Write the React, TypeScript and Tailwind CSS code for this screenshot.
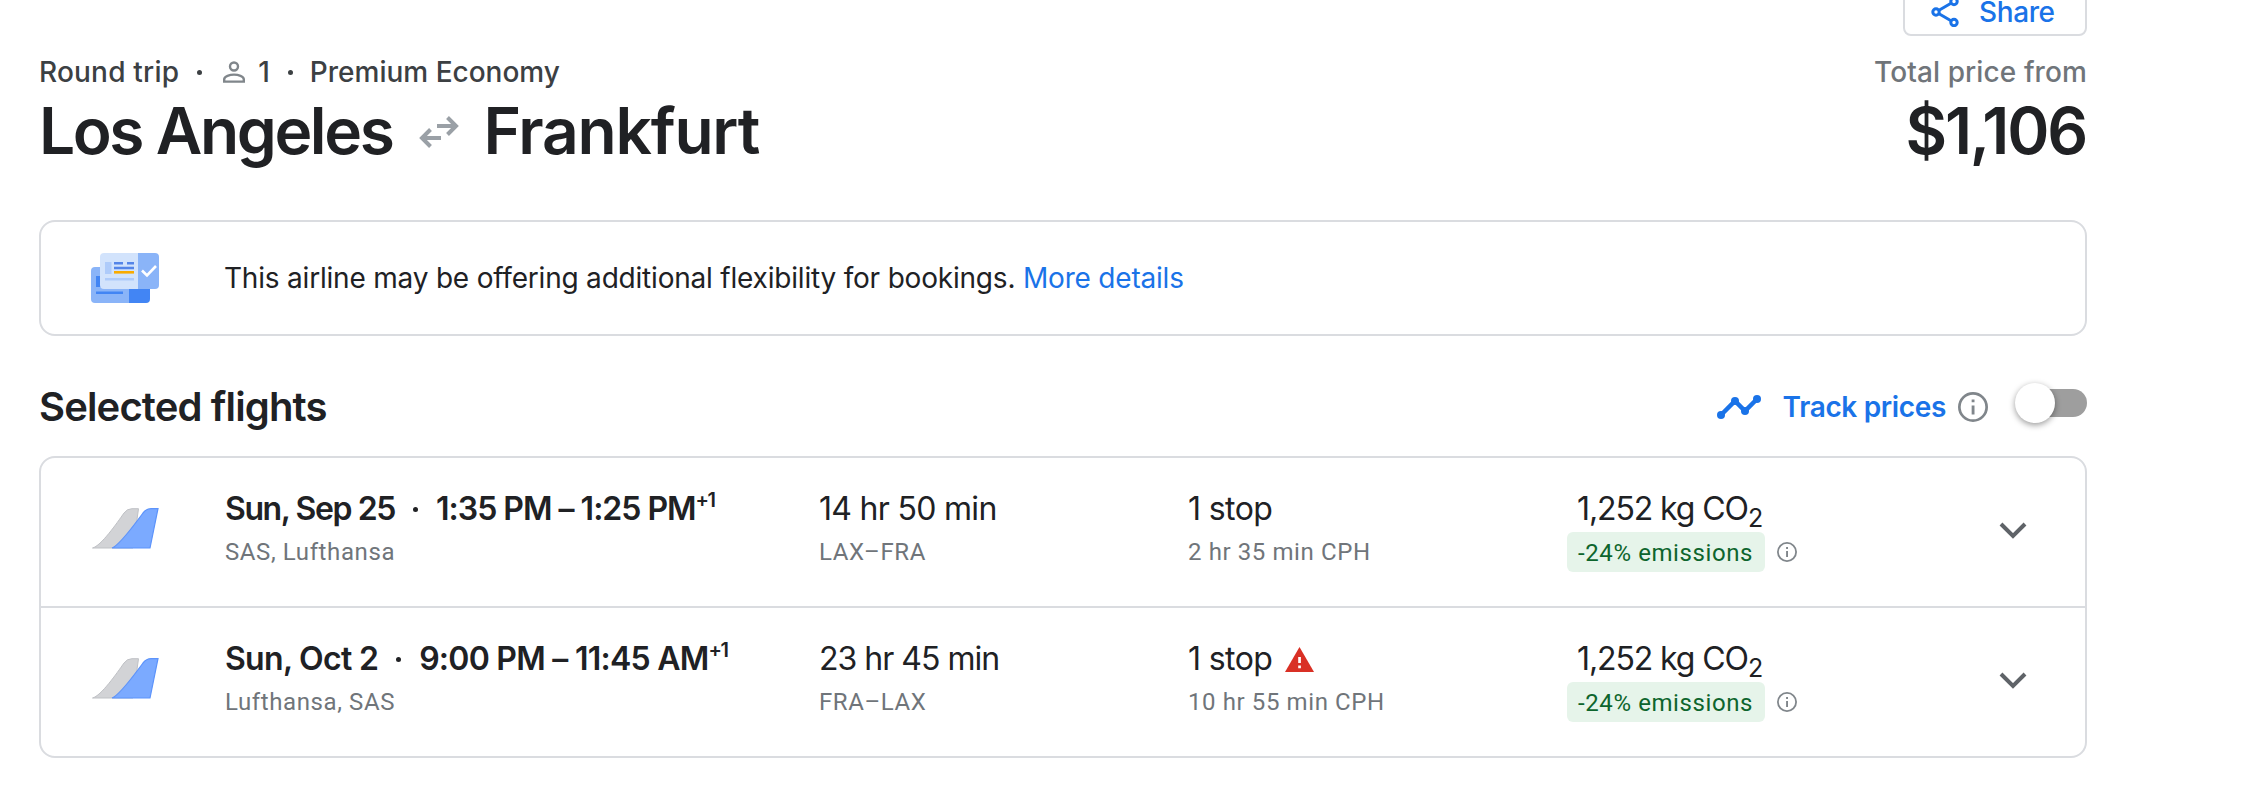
import type { ReactNode } from 'react';

interface Flight {
  date: string;
  dateClass: string;
  times: string;
  timesClass: string;
  dayOffset: string;
  airlines: string;
  duration: string;
  durationClass: string;
  route: string;
  stops: string;
  layover: string;
  warning?: boolean;
}

const flights: Flight[] = [
  {
    date: 'Sun, Sep 25',
    dateClass: 'tracking-[-1.4px]',
    times: '1:35 PM – 1:25 PM',
    timesClass: 'tracking-[-1px]',
    dayOffset: '+1',
    airlines: 'SAS, Lufthansa',
    duration: '14 hr 50 min',
    durationClass: 'tracking-[-0.7px]',
    route: 'LAX–FRA',
    stops: '1 stop',
    layover: '2 hr 35 min CPH',
  },
  {
    date: 'Sun, Oct 2',
    dateClass: 'tracking-[-0.7px]',
    times: '9:00 PM – 11:45 AM',
    timesClass: 'tracking-[-0.75px]',
    dayOffset: '+1',
    airlines: 'Lufthansa, SAS',
    duration: '23 hr 45 min',
    durationClass: 'tracking-[-1px]',
    route: 'FRA–LAX',
    stops: '1 stop',
    layover: '10 hr 55 min CPH',
    warning: true,
  },
];

function ShareIcon() {
  return (
    <svg className="h-[30px] w-[28px]" viewBox="0 0 28 30" fill="none" stroke="#1a73e8" strokeWidth="3">
      <circle cx="5" cy="15" r="3.2" />
      <circle cx="23" cy="4.5" r="3.2" />
      <circle cx="23" cy="25.5" r="3.2" />
      <path d="M8 13.3 20 6.3M8 16.7l12 7" />
    </svg>
  );
}

function PersonIcon() {
  return (
    <svg className="h-[22px] w-[22px]" viewBox="0 0 22 22" fill="none" stroke="#80868b" strokeWidth="2.4">
      <circle cx="11" cy="5.5" r="4" />
      <path d="M1.2 20.6v-2.4c0-3 5.5-4.6 9.8-4.6s9.8 1.6 9.8 4.6v2.4z" />
    </svg>
  );
}

function RoundTripIcon() {
  return (
    <svg className="h-[32px] w-[40px]" viewBox="0 0 40 32" fill="none" stroke="#9aa0a6" strokeWidth="4">
      <path d="M18 10h19M28.5 1.5 37 10l-8.5 8.5M22 22H3M11.5 13.5 3 22l8.5 8.5" />
    </svg>
  );
}

function TicketsIcon() {
  return (
    <svg className="h-[50px] w-[68px]" viewBox="0 0 68 50">
      <path d="M4 14h34v36H4a4 4 0 0 1-4-4V18a4 4 0 0 1 4-4z" fill="#8ab4f8" />
      <path d="M38 30h21v16a4 4 0 0 1-4 4H38z" fill="#4285f4" />
      <path d="M5 23h6v11H5zM5 38.5h27v2.6H5z" fill="#4285f4" />
      <path d="M13 0h35v36H13a4 4 0 0 1-4-4V4a4 4 0 0 1 4-4z" fill="#d2e3fc" />
      <path d="M47 0h17a4 4 0 0 1 4 4v28a4 4 0 0 1-4 4H47z" fill="#8ab4f8" />
      <path d="M14 9h6.5v12H14zM14 25h29v2.4H14z" fill="#aecbfa" />
      <path d="M23 9h9v2.6h-9zM36 9h7v2.6h-7zM23 13.8h20v2.4H23z" fill="#5485e8" />
      <path d="M23 18h20v2.6H23z" fill="#f9ab00" />
      <path d="m51 17.5 5 5L65 13" fill="none" stroke="#fff" strokeWidth="2.6" />
    </svg>
  );
}

function TrendIcon() {
  return (
    <svg className="h-[26px] w-[44px]" viewBox="0 0 44 26" fill="#1a73e8">
      <path d="M4 21 18 7l10 10L40 5" fill="none" stroke="#1a73e8" strokeWidth="4.5" />
      <circle cx="4" cy="21" r="4" />
      <circle cx="18" cy="7" r="4" />
      <circle cx="28" cy="17" r="4" />
      <circle cx="40" cy="5" r="4" />
    </svg>
  );
}

function InfoIcon({ className = '' }: { className?: string }) {
  return (
    <svg className={className} viewBox="0 0 20 20" fill="#80868b">
      <circle cx="10" cy="10" r="9.1" fill="none" stroke="#80868b" strokeWidth="1.8" />
      <path d="M9.1 9h1.9v6H9.1zM9.1 5h1.9v1.9H9.1z" />
    </svg>
  );
}

function TailsIcon() {
  return (
    <svg className="h-[41px] w-[68px]" viewBox="0 0 68 41">
      <path d="M1.5 40C10 38 26 15 33 5q3-4.3 8-4.3h6.5L42 40z" fill="#d2d3d6" stroke="#bfc1c5" />
      <path
        d="M21 40C29 37 43 17 52 5q3.5-4.3 8-4.3h7L59 40z"
        fill="#7baaff"
        stroke="#5c93fb"
        strokeWidth="1.2"
      />
    </svg>
  );
}

function WarningIcon() {
  return (
    <svg className="h-[25px] w-[29px]" viewBox="0 0 29 25">
      <path d="M14.5 0 29 25H0z" fill="#d93025" />
      <path d="M13.2 10h2.7v6h-2.7zM13.2 18.5h2.7v2.7h-2.7z" fill="#fff" />
    </svg>
  );
}

function ChevronIcon() {
  return (
    <svg className="h-[17px] w-[28px]" viewBox="0 0 28 17" fill="none" stroke="#5f6368" strokeWidth="4">
      <path d="m2 2 12 12L26 2" />
    </svg>
  );
}

function Dot({ className = '' }: { className?: string }) {
  return <span className={`inline-block h-[5px] w-[5px] rounded-full ${className}`} />;
}

function Subtext({ children }: { children: ReactNode }) {
  return (
    <div className="mt-[7px] font-[Roboto] text-[24px] leading-8 tracking-[0.6px] text-[#70757a]">
      {children}
    </div>
  );
}

function FlightRow({ flight }: { flight: Flight }) {
  return (
    <div className="box-content grid h-[148px] grid-cols-[184px_594px_369px_379px_1fr] text-[32px] leading-10 whitespace-nowrap">
      <div className="pt-[50px] pl-[50px]">
        <TailsIcon />
      </div>
      <div className="pt-[31px]">
        <div className="flex items-center font-semibold">
          <span className={flight.dateClass}>{flight.date}</span>
          <Dot className="mx-[18px] bg-[#202124]" />
          <span className={flight.timesClass}>{flight.times}</span>
          <span className="-mt-[18px] text-[20px] leading-5 tracking-[-1.5px]">{flight.dayOffset}</span>
        </div>
        <Subtext>{flight.airlines}</Subtext>
      </div>
      <div className="pt-[31px]">
        <div className={flight.durationClass}>{flight.duration}</div>
        <Subtext>{flight.route}</Subtext>
      </div>
      <div className="pt-[31px]">
        <div className="flex items-center gap-[13px] tracking-[-0.6px]">
          {flight.stops}
          {flight.warning && <WarningIcon />}
        </div>
        <Subtext>{flight.layover}</Subtext>
      </div>
      <div className="flex justify-between pt-[31px]">
        <div>
          <div className="flex h-10 pl-[10px] tracking-[-1.1px]">
            1,252 kg CO<span className="mt-[13px] text-[25px] leading-8">2</span>
          </div>
          <div className="mt-[3px] flex items-center gap-3">
            <span className="h-10 w-[198px] rounded-md bg-[#e6f4ea] pt-px pl-[11px] font-[Roboto] text-[24px] tracking-[0.6px] text-[#0d652d]">
              -24% emissions
            </span>
            <InfoIcon className="h-[20px] w-[20px]" />
          </div>
        </div>
        <div className="pt-[33px] pr-[58px]">
          <ChevronIcon />
        </div>
      </div>
    </div>
  );
}

export default function App() {
  return (
    <div className="h-[792px] overflow-hidden bg-white font-[Inter,sans-serif] text-[#202124]">
      <div className="ml-[39px] w-[2048px]">
        <div className="flex h-9 items-end justify-end">
          <button className="flex h-[72px] w-[184px] shrink-0 items-center gap-[20px] rounded-lg border-2 border-[#dadce0] pt-[23px] pl-[26px] text-[28px] font-medium tracking-[-0.4px] text-[#1a73e8]">
            <ShareIcon />
            Share
          </button>
        </div>

        <header className="mt-[15px] flex justify-between whitespace-nowrap">
          <div>
            <div className="flex h-[39px] items-center pt-[3px] text-[28px] leading-[39px] font-medium text-[#3c4043]">
              <span className="tracking-[0.2px]">Round trip</span>
              <Dot className="mr-[21px] ml-[18px] bg-[#3c4043]" />
              <PersonIcon />
              <span className="ml-[13px]">1</span>
              <Dot className="mr-[17px] ml-[18px] bg-[#3c4043]" />
              <span>Premium Economy</span>
            </div>
            <h1 className="flex h-20 items-center pt-px text-[64px] leading-[80px] font-semibold">
              <span className="tracking-[-2.4px]">Los Angeles</span>
              <span className="mt-[3px] mr-[24px] ml-[27px]">
                <RoundTripIcon />
              </span>
              <span className="tracking-[-1.2px]">Frankfurt</span>
            </h1>
          </div>
          <div className="text-right">
            <div className="h-[39px] pt-[2px] text-[28px] leading-[39px] font-medium tracking-[0.1px] text-[#70757a]">
              Total price from
            </div>
            <div className="pt-px pr-px text-[64px] leading-[80px] font-semibold tracking-[-2.2px]">$1,106</div>
          </div>
        </header>

        <section className="mt-[49px] flex h-[116px] items-center rounded-2xl border-2 border-[#dadce0] pl-[50px] text-[28px] whitespace-nowrap">
          <TicketsIcon />
          <p className="ml-[65px] tracking-[-0.2px]">
            This airline may be offering additional flexibility for bookings.{' '}
            <a className="text-[#1a73e8]">More details</a>
          </p>
        </section>

        <div className="mt-[47px] flex h-[48px] items-center justify-between whitespace-nowrap">
          <h2 className="text-[40px] leading-[48px] font-semibold tracking-[-0.85px]">Selected flights</h2>
          <div className="flex items-center">
            <TrendIcon />
            <span className="ml-[22px] text-[28px] font-semibold tracking-[-0.35px] text-[#1a73e8]">
              Track prices
            </span>
            <InfoIcon className="ml-3 h-[30px] w-[30px]" />
            <div className="-mt-[9px] ml-[27px] flex h-10 w-[72px] items-center">
              <span className="z-10 h-10 w-10 shrink-0 rounded-full bg-white shadow-[0_2px_6px_rgba(0,0,0,0.4)]" />
              <span className="-ml-[34px] h-7 w-[66px] shrink-0 rounded-full bg-[#9e9e9e]" />
            </div>
          </div>
        </div>

        <section className="mt-[25px] divide-y-2 divide-[#dadce0] rounded-2xl border-2 border-[#dadce0]">
          {flights.map((flight) => (
            <FlightRow key={flight.date} flight={flight} />
          ))}
        </section>
      </div>
    </div>
  );
}
